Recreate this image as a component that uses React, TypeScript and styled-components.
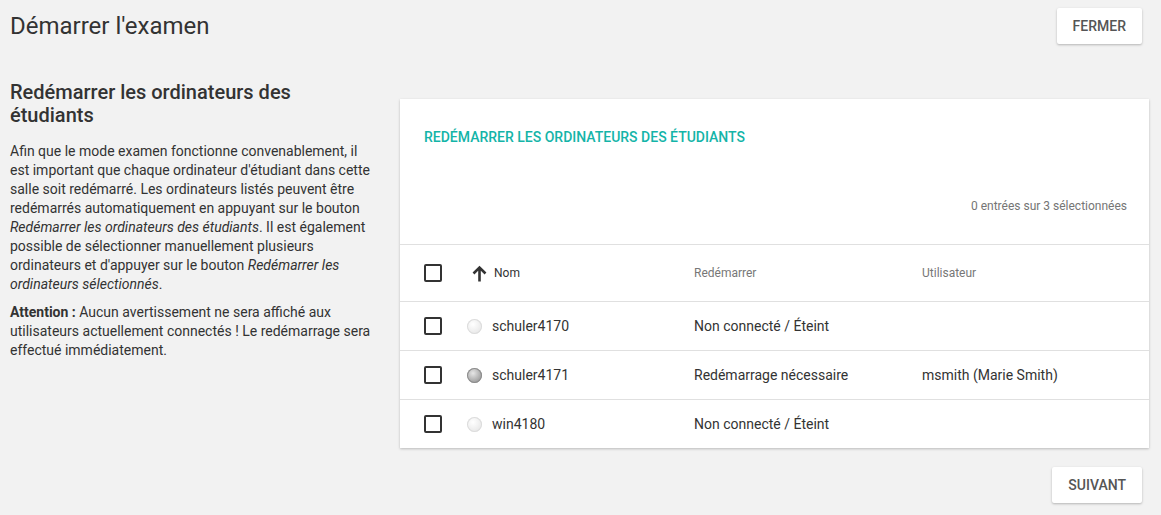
import React from "react";
import styled, { createGlobalStyle } from "styled-components";

const Global = createGlobalStyle`
  html, body { margin: 0; padding: 0; background: #f2f2f2; }
  body { font-family: Roboto, "Noto Sans", Arial, sans-serif; color: #333; }
  * { box-sizing: border-box; }
`;

const Page = styled.div`
  width: 1161px;
  min-height: 515px;
  padding: 0 12px 0 10px;
  background: #f2f2f2;
`;

const TopBar = styled.div`
  display: flex;
  align-items: center;
  justify-content: space-between;
  height: 51px;
  padding-right: 7px;
`;

const Title = styled.h1`
  margin: 0;
  font-size: 24px;
  font-weight: 400;
  color: #333;
`;

const Button = styled.button`
  height: 36px;
  padding: 0 16px;
  border: none;
  border-radius: 2px;
  background: #fff;
  color: #555;
  font-family: Roboto, sans-serif;
  font-size: 14px;
  font-weight: 500;
  text-transform: uppercase;
  box-shadow: 0 1px 3px rgba(0,0,0,0.15), 0 1px 2px rgba(0,0,0,0.12);
`;

const Main = styled.div`
  display: grid;
  grid-template-columns: 390px 1fr;
  margin-top: 29px;
`;

const Side = styled.div`
  padding-right: 24px;
`;

const SideTitle = styled.h2`
  margin: 1px 0 15px;
  font-size: 20px;
  font-weight: 500;
  line-height: 23px;
  color: #333;
`;

const Para = styled.p`
  margin: 0 0 9px;
  font-size: 14px;
  line-height: 19px;
  color: #333;
`;

const Card = styled.div`
  margin-top: 19px;
  background: #fff;
  box-shadow: 0 1px 3px rgba(0,0,0,0.14), 0 1px 2px rgba(0,0,0,0.1);
`;

const CardHead = styled.div`
  padding: 28px 22px 0 24px;
  height: 145px;
  display: flex;
  flex-direction: column;
`;

const CardTitle = styled.div`
  font-size: 14px;
  font-weight: 500;
  color: #14b4a8;
  text-transform: uppercase;
  line-height: 20px;
`;

const Counter = styled.div`
  margin-top: 51px;
  align-self: flex-end;
  font-size: 12px;
  color: #757575;
  line-height: 16px;
`;

const Table = styled.div`
  border-top: 1px solid #e0e0e0;
`;

const Row = styled.div<{ $head?: boolean }>`
  display: grid;
  grid-template-columns: 67px 227px 228px 1fr;
  align-items: center;
  height: ${(p) => (p.$head ? "56px" : "49px")};
  border-top: ${(p) => (p.$head ? "none" : "1px solid #e0e0e0")};
  font-size: ${(p) => (p.$head ? "12px" : "14px")};
  color: ${(p) => (p.$head ? "#777" : "#333")};
`;

const Box = styled.span`
  display: block;
  width: 18px;
  height: 18px;
  margin-left: 24px;
  border: 2px solid #333;
  border-radius: 2px;
`;

const NameCell = styled.div`
  display: flex;
  align-items: center;
  gap: 10px;
`;

const SortHead = styled.div`
  display: flex;
  align-items: center;
  gap: 7px;
  color: #333;
  padding-left: 5px;
`;

const Dot = styled.span<{ $on?: boolean }>`
  width: 15px;
  height: 15px;
  border-radius: 50%;
  background: ${(p) =>
    p.$on
      ? "radial-gradient(circle at 40% 35%, #e6e6e6, #9a9a9a 75%)"
      : "radial-gradient(circle at 40% 35%, #ffffff, #e6e6e6 80%)"};
  box-shadow: inset 0 0 0 1px ${(p) => (p.$on ? "#8c8c8c" : "#dcdcdc")};
`;

const Footer = styled.div`
  display: flex;
  justify-content: flex-end;
  padding: 19px 7px 0 0;
`;

const rows = [
  { name: "schuler4170", on: false, status: "Non connecté / Éteint", user: "" },
  { name: "schuler4171", on: true, status: "Redémarrage nécessaire", user: "msmith (Marie Smith)" },
  { name: "win4180", on: false, status: "Non connecté / Éteint", user: "" },
];

export default function App() {
  return (
    <>
      <Global />
      <Page>
        <TopBar>
          <Title>Démarrer l'examen</Title>
          <Button>Fermer</Button>
        </TopBar>
        <Main>
          <Side>
            <SideTitle>Redémarrer les ordinateurs des étudiants</SideTitle>
            <Para>
              Afin que le mode examen fonctionne convenablement, il est important que chaque
              ordinateur d'étudiant dans cette salle soit redémarré. Les ordinateurs listés
              peuvent être redémarrés automatiquement en appuyant sur le bouton{" "}
              <em>Redémarrer les ordinateurs des étudiants</em>. Il est également possible de
              sélectionner manuellement plusieurs ordinateurs et d'appuyer sur le bouton{" "}
              <em>Redémarrer les ordinateurs sélectionnés</em>.
            </Para>
            <Para>
              <strong>Attention :</strong> Aucun avertissement ne sera affiché aux utilisateurs
              actuellement connectés ! Le redémarrage sera effectué immédiatement.
            </Para>
          </Side>
          <div>
            <Card>
              <CardHead>
                <CardTitle>Redémarrer les ordinateurs des étudiants</CardTitle>
                <Counter>0 entrées sur 3 sélectionnées</Counter>
              </CardHead>
              <Table>
                <Row $head>
                  <Box />
                  <SortHead>
                    <svg width="15" height="17" viewBox="0 0 15 17">
                      <path d="M7.5 16.5V2.5M1.5 8.5l6-6 6 6" fill="none" stroke="#333" strokeWidth="2.6" />
                    </svg>
                    Nom
                  </SortHead>
                  <div>Redémarrer</div>
                  <div>Utilisateur</div>
                </Row>
                {rows.map((r) => (
                  <Row key={r.name}>
                    <Box />
                    <NameCell>
                      <Dot $on={r.on} />
                      {r.name}
                    </NameCell>
                    <div>{r.status}</div>
                    <div>{r.user}</div>
                  </Row>
                ))}
              </Table>
            </Card>
            <Footer>
              <Button>Suivant</Button>
            </Footer>
          </div>
        </Main>
      </Page>
    </>
  );
}
